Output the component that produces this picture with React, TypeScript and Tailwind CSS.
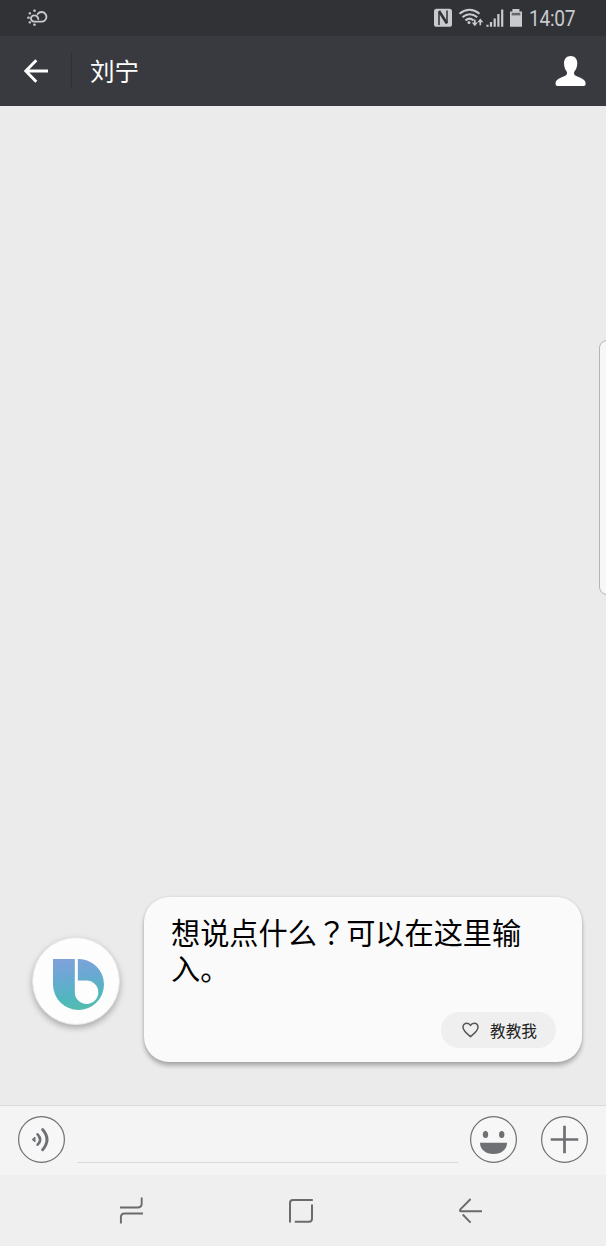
import type { ReactNode } from 'react';

function StatusBar() {
  return (
    <div className="h-[36px] shrink-0 bg-[#313236] flex items-start text-[#c9cace]">
      <svg className="ml-[26px] mt-[8px]" width="22" height="19" viewBox="0 0 66 57" fill="none" stroke="currentColor" strokeWidth="5.5" strokeLinecap="round">
        <path d="M37 33Q35 22 25 22A9.500 9.500 0 0 0 24 41H48A14.500 14.500 0 1 0 35 18" />
        <path d="M7 29h1M11 16h1M25 8h1M11 43h1M25 50h1" strokeWidth="7" />
      </svg>
      <div className="flex-1" />
      <svg className="mt-[8px]" width="96" height="20" viewBox="0 0 96 20">
        <rect x="0" y="0.8" width="18" height="18" rx="2.6" fill="currentColor" />
        <path d="M5 17V4.500M13 2.500V15" fill="none" stroke="#313236" strokeWidth="1.500" />
        <path d="M5 3 13 15.500" fill="none" stroke="#313236" strokeWidth="2.600" />
        <g fill="none" stroke="currentColor" strokeWidth="2">
          <path d="M25.5 5.7 Q35.5 -2.2 45.5 5.7" />
          <path d="M28.5 9.1 Q35.5 3.4 43.3 9.1" />
          <path d="M31.4 12.4 Q35.5 8.8 39.6 12.4" />
        </g>
        <circle cx="35" cy="14.4" r="1.5" fill="currentColor" />
        <path d="M40.8 11.5 V16 M46.3 17.2 V12.7" stroke="currentColor" strokeWidth="1.6" />
        <path d="M37.800 14.400h6L40.8 18.200zM43.300 14.200h6L46.3 10.400z" fill="currentColor" />
        <path d="M53.500 18.800v-2M57 18.800v-4.800M60.700 18.800v-8.300M64.400 18.800V6M68.200 18.800V1.500" stroke="currentColor" strokeWidth="2.200" />
        <path d="M78.4 1h7v2.6H88v15.2H76V3.6h2.4z" fill="currentColor" />
        <path d="M77.7 4.800h8.6v2.600h-8.6z" fill="#67686c" />
      </svg>
      <span className="w-[77px] mt-[5.5px] -ml-px font-['Roboto',sans-serif] text-[22px] leading-[26px] tracking-[-0.3px] origin-left scale-x-[0.87]">14:07</span>
    </div>
  );
}

function Header() {
  return (
    <header className="h-[70px] shrink-0 bg-[#393a3f] flex items-center text-white">
      <svg className="ml-[24px]" width="24" height="24" viewBox="0 0 24 24" fill="none" stroke="currentColor" strokeWidth="2.9">
        <path d="M24 12H2M12.3 1.2 1.8 12l10.5 10.8" />
      </svg>
      <div className="ml-[23px] w-px h-[36px] bg-[#2f3034]" />
      <h1 className="ml-[18px] text-[24.5px] leading-[36px] font-normal">刘宁</h1>
      <svg className="ml-auto mr-[20px]" width="31" height="31" viewBox="0 0 31 31" fill="currentColor">
        <path d="M15.7 0C11.8 0 9 2.8 9 7c0 3.8 1.1 6.500 2.700 8.600.9 1.900.1 3.300-1.400 4.100-2.900 1.500-6.800 2.300-8.800 4.800C.6 25.800.3 28 .8 29c.4.8 1.2 1 2.300 1h25c1.200 0 2-.2 2.300-1 .5-1.300.2-3.200-.9-4.500-2-2.500-5.900-3.300-8.800-4.800-1.500-.8-2.200-2.200-1.300-4.100 1.600-2.100 2.900-4.800 2.900-8.600C22.300 2.800 19.600 0 15.700 0z" />
      </svg>
    </header>
  );
}

function AssistantLogo() {
  return (
    <div className="w-[88px] h-[88px] rounded-full bg-[#fdfdfd] border border-[#e4e4e4] shadow-[0_3px_6px_rgba(0,0,0,0.28)] flex items-center justify-center">
      <svg className="mt-[6px] ml-[5px]" width="51" height="51" viewBox="0 0 152 152">
        <defs>
          <linearGradient id="stem" x1="0.4" y1="0" x2="0.55" y2="1">
            <stop offset="0" stopColor="#7fa2da" />
            <stop offset="0.35" stopColor="#69a9d2" />
            <stop offset="0.75" stopColor="#50b7bd" />
            <stop offset="1" stopColor="#55bcad" />
          </linearGradient>
        </defs>
        <path fill="url(#stem)" d="M0 0H65V99A35 35 0 0 0 135 99A35 35 0 0 0 100 64H74V0A76 76 0 0 1 152 76A76 76 0 0 1 0 76Z" />
      </svg>
    </div>
  );
}

function SuggestionCard() {
  return (
    <div className="w-[438px] h-[165px] rounded-[25px] bg-[#fafafa] shadow-[0_4px_4px_rgba(0,0,0,0.25),0_0_3px_rgba(0,0,0,0.12)] pt-[16px] px-[27px] pb-[14px] flex flex-col justify-between">
      <p className="text-[29.2px] leading-[36px] text-black">
        想说点什么<span lang="zh-TW" className="font-['Noto_Sans_CJK_TC',sans-serif]">？</span>可以在这里输<br />入。
      </p>
      <button className="self-end -mr-px w-[115px] h-[36px] rounded-full bg-[#efefef] flex items-center text-[#222]">
        <svg className="ml-[21px]" width="17" height="16" viewBox="0 0 17 16" fill="none" stroke="#555" strokeWidth="1.5" strokeLinejoin="round">
          <path d="M8.500 14.700C4.300 11.400 1 8.800 1 5.300 1 2.800 2.800 1.200 4.900 1.200c1.600 0 2.900.9 3.600 2.300.7-1.400 2-2.300 3.600-2.300C14.200 1.200 16 2.800 16 5.300c0 3.500-3.300 6.100-7.500 9.400z" />
        </svg>
        <span className="ml-[11px] mt-[2px] text-[15.7px] leading-[24px]">教教我</span>
      </button>
    </div>
  );
}

function RoundButton({ label, children }: { label: string; children: ReactNode }) {
  return (
    <button aria-label={label} className="w-[47px] h-[47px] shrink-0">
      <svg width="47" height="47" viewBox="0 0 47 47" fill="none" stroke="#6e7074">
        <circle cx="23.5" cy="23.500" r="22.900" strokeWidth="1.200" fill="#f7f7f7" />
        {children}
      </svg>
    </button>
  );
}

function InputBar() {
  return (
    <div className="h-[70px] shrink-0 bg-[#f4f4f4] border-t border-[#dadada] flex items-start pt-[10px] px-[18px]">
      <RoundButton label="voice">
        <path d="M14.2 23.500 L17 21v5z" fill="#6e7074" strokeWidth="1" strokeLinejoin="round" />
        <path d="M19.600 18.300Q24.600 23.500 19.600 28.700" strokeWidth="2.600" strokeLinecap="round" />
        <path d="M24.600 13.500Q33.400 23.500 24.600 33.800" strokeWidth="2.900" strokeLinecap="round" />
      </RoundButton>
      <div className="ml-[12px] mr-[12px] flex-1 h-[47px] border-b border-[#d9d9d9]" />
      <RoundButton label="emoji">
        <ellipse cx="15.500" cy="18.400" rx="2.700" ry="3.500" fill="#6e7074" stroke="none" />
        <ellipse cx="31.700" cy="18.400" rx="2.700" ry="3.500" fill="#6e7074" stroke="none" />
        <path d="M10 26.800H37C37 33.400 31.500 38 23.500 38S10 33.400 10 26.800z" fill="#6e7074" stroke="none" />
      </RoundButton>
      <div className="w-[24px]" />
      <RoundButton label="more">
        <path d="M23.500 9.700V37.300M9.700 23.500H37.300" strokeWidth="2.700" />
      </RoundButton>
    </div>
  );
}

function NavBar() {
  return (
    <nav className="h-[71px] shrink-0 bg-[#efefef] flex items-center pl-[119px]">
      <svg className="-mt-px" width="24" height="28" viewBox="0 0 24 28" fill="none" stroke="#6b6b6b" strokeWidth="1.900">
        <path d="M1 11.500H18.500Q22.700 11.500 22.700 7.500V1.500M24 17.500H5.500Q1.900 17.500 1.900 21.500V27.500" />
      </svg>
      <svg className="ml-[145px]" width="26" height="26" viewBox="0 0 26 26" fill="none" stroke="#6b6b6b" strokeWidth="2">
        <path d="M2 24.500V5Q2 2 5 2H24.800M24 6.500V20.500Q24 23.700 21 23.700H6.800" />
      </svg>
      <svg className="ml-[144px]" width="25" height="26" viewBox="0 0 25 26" fill="none" stroke="#6b6b6b" strokeWidth="1.900">
        <path d="M12.600 1 2.600 11.200Q1 13.200 3.200 13.200H24M4.700 16.500 12.600 24.700" />
      </svg>
    </nav>
  );
}

export default function App() {
  return (
    <div className="w-[606px] h-[1246px] overflow-hidden flex flex-col bg-[#ebebeb] font-['Noto_Sans_CJK_SC',sans-serif]" lang="zh-CN">
      <StatusBar />
      <Header />
      <main className="relative flex-1 flex items-end pl-[32px] pb-[43px]">
        {/* edge panel handle */}
        <div className="absolute right-[-10px] top-[234px] w-[17px] h-[255px] rounded-[8px] bg-[#f7f7f7] border border-[#b5b5b5]" />
        <div className="mb-[37px]">
          <AssistantLogo />
        </div>
        <div className="ml-[24px]">
          <SuggestionCard />
        </div>
      </main>
      <InputBar />
      <NavBar />
    </div>
  );
}
